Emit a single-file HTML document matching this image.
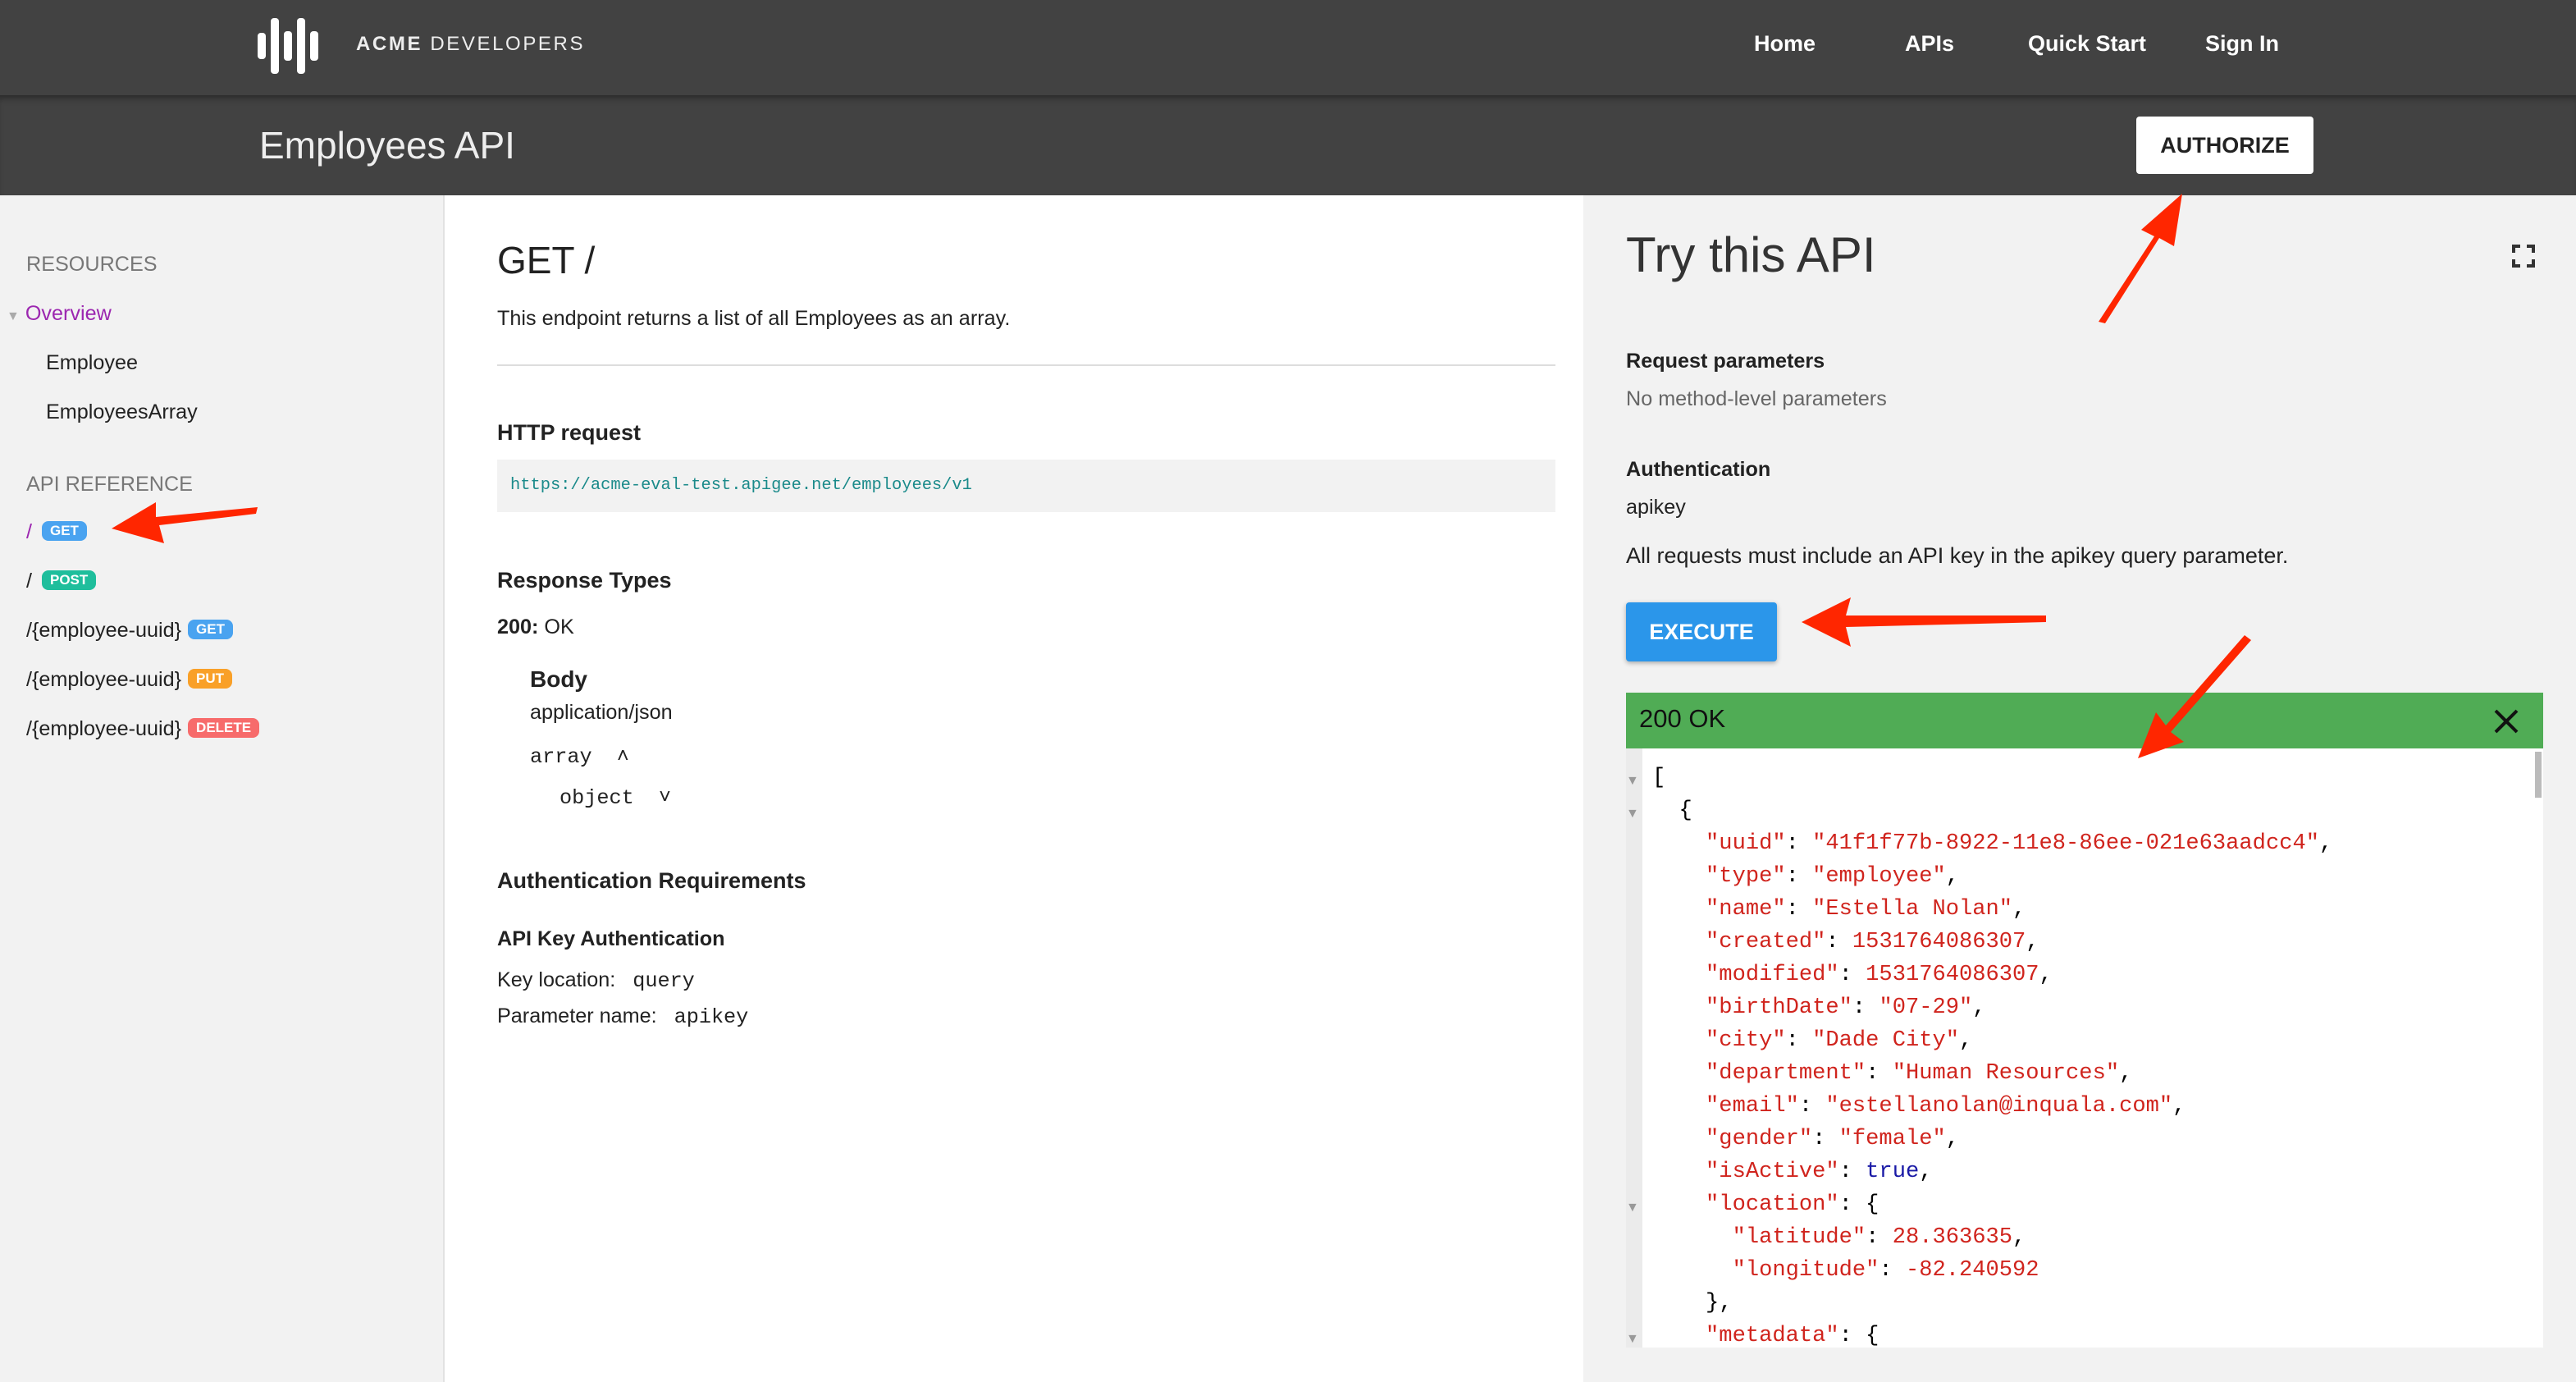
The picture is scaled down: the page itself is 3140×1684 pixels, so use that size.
<!DOCTYPE html>
<html><head><meta charset="utf-8"><style>
html{zoom:2}
*{box-sizing:border-box;margin:0;padding:0}
body{width:1570px;height:842px;overflow:hidden;font-family:"Liberation Sans",sans-serif;background:#fff;position:relative;color:#222;font-size:12.6px}
.a{position:absolute}
.top{left:0;top:0;width:1570px;height:58px;background:#424242}
.bar2{left:0;top:58px;width:1570px;height:61px;background:#424242;box-shadow:inset 0 4px 4px -2px rgba(0,0,0,.35)}
.nav{color:#fff;font-weight:bold;font-size:13.5px;top:19px}
.side{left:0;top:119px;width:271px;height:723px;background:#f2f2f2;border-right:1px solid #e2e2e2}
.right{left:965px;top:119px;width:605px;height:723px;background:#f2f2f2}
.badge{display:inline-block;color:#fff;font-size:8.5px;font-weight:bold;border-radius:4px;padding:1px 5px;vertical-align:2px;margin-left:4px}
.mono{font-family:"Liberation Mono",monospace}
.code{font-family:"Liberation Mono",monospace;font-size:13.55px;line-height:20px;white-space:pre;color:#000}
.k{color:#d0241d}.s{color:#d0241d}.n{color:#d0241d}.t{color:#1a1aa6}
</style></head><body>
<div class="a top"></div>
<svg class="a" style="left:157px;top:11px" width="46" height="34"><g fill="#fff"><rect x="0" y="9" width="5" height="16" rx="2"/><rect x="8" y="0" width="5" height="34" rx="2"/><rect x="16" y="8" width="5" height="18" rx="2"/><rect x="24" y="0" width="5" height="34" rx="2"/><rect x="32" y="8" width="5" height="18" rx="2"/></g></svg>
<div class="a" style="left:217px;top:20px;color:#eee;font-size:12px;letter-spacing:1.3px"><b>ACME</b> DEVELOPERS</div>
<div class="a nav" style="left:1069px">Home</div>
<div class="a nav" style="left:1161px">APIs</div>
<div class="a nav" style="left:1236px">Quick Start</div>
<div class="a nav" style="left:1344px">Sign In</div>
<div class="a bar2"></div>
<div class="a" style="left:158px;top:75px;color:#eee;font-size:23px">Employees API</div>
<div class="a" style="left:1302px;top:71px;width:108px;height:35px;background:#fff;border-radius:2px;font-weight:bold;font-size:13.5px;text-align:center;line-height:35px;color:#222">AUTHORIZE</div>

<div class="a side"></div>
<div class="a" style="left:16px;top:154px;color:#777">RESOURCES</div>
<div class="a" style="left:4px;top:184px;color:#9c27b0"><span style="color:#aaa;font-size:8px">▼</span> Overview</div>
<div class="a" style="left:28px;top:214px">Employee</div>
<div class="a" style="left:28px;top:244px">EmployeesArray</div>
<div class="a" style="left:16px;top:288px;color:#777">API REFERENCE</div>
<div class="a" style="left:16px;top:317px"><span style="color:#9c27b0">/</span><span class="badge" style="background:#4aa3f0;margin-left:6px">GET</span></div>
<div class="a" style="left:16px;top:347px">/<span class="badge" style="background:#1fbe9c;margin-left:6px">POST</span></div>
<div class="a" style="left:16px;top:377px">/{employee-uuid}<span class="badge" style="background:#4aa3f0">GET</span></div>
<div class="a" style="left:16px;top:407px">/{employee-uuid}<span class="badge" style="background:#f9a028">PUT</span></div>
<div class="a" style="left:16px;top:437px">/{employee-uuid}<span class="badge" style="background:#f76b6b">DELETE</span></div>

<div class="a" style="left:303px;top:145px;font-size:23px">GET /</div>
<div class="a" style="left:303px;top:187px">This endpoint returns a list of all Employees as an array.</div>
<div class="a" style="left:303px;top:222px;width:645px;height:1px;background:#ddd"></div>
<div class="a" style="left:303px;top:256px;font-size:13.5px;font-weight:bold">HTTP request</div>
<div class="a mono" style="left:303px;top:280px;width:645px;height:32px;background:#f2f2f2;color:#1a8a8a;font-size:10.2px;padding:10px 8px">https://acme-eval-test.apigee.net/employees/v1</div>
<div class="a" style="left:303px;top:346px;font-size:13.5px;font-weight:bold">Response Types</div>
<div class="a" style="left:303px;top:375px"><b>200:</b> OK</div>
<div class="a" style="left:323px;top:406px;font-size:14px;font-weight:bold">Body</div>
<div class="a" style="left:323px;top:427px">application/json</div>
<div class="a mono" style="left:323px;top:454px">array &nbsp;˄</div>
<div class="a mono" style="left:341px;top:479px">object &nbsp;˅</div>
<div class="a" style="left:303px;top:529px;font-size:13.5px;font-weight:bold">Authentication Requirements</div>
<div class="a" style="left:303px;top:565px;font-weight:bold">API Key Authentication</div>
<div class="a" style="left:303px;top:590px">Key location: &nbsp;&nbsp;<span class="mono">query</span></div>
<div class="a" style="left:303px;top:612px">Parameter name: &nbsp;&nbsp;<span class="mono">apikey</span></div>

<div class="a right"></div>
<div class="a" style="left:991px;top:138px;font-size:30px;font-weight:300;color:#333">Try this API</div>
<svg class="a" style="left:1531px;top:149px" width="14" height="14" fill="none" stroke="#333" stroke-width="2"><path d="M1 5V1h4M9 1h4v4M13 9v4H9M5 13H1V9"/></svg>
<div class="a" style="left:991px;top:213px;font-weight:bold">Request parameters</div>
<div class="a" style="left:991px;top:236px;color:#666">No method-level parameters</div>
<div class="a" style="left:991px;top:279px;font-weight:bold">Authentication</div>
<div class="a" style="left:991px;top:302px">apikey</div>
<div class="a" style="left:991px;top:331px;font-size:13.5px">All requests must include an API key in the apikey query parameter.</div>
<div class="a" style="left:991px;top:367px;width:92px;height:36px;background:#2b96ea;color:#fff;font-weight:bold;font-size:13.5px;text-align:center;line-height:36px;border-radius:2px;box-shadow:0 1px 3px rgba(0,0,0,.3)">EXECUTE</div>
<div class="a" style="left:991px;top:422px;width:559px;height:34px;background:#50ac55"></div>
<div class="a" style="left:999px;top:429px;font-size:15.5px;color:#111">200 OK</div>
<svg class="a" style="left:1520px;top:432px" width="15" height="15" stroke="#111" stroke-width="2"><path d="M1 1L14 14M14 1L1 14"/></svg>
<div class="a" style="left:991px;top:456px;width:559px;height:365px;background:#fff"></div>
<div class="a" style="left:991px;top:456px;width:10px;height:365px;background:#ebebeb"></div>
<div class="a" style="left:1545px;top:458px;width:4px;height:28px;background:#bbb"></div>
<div class="a" style="left:991px;top:466px;color:#999;font-size:8px;line-height:20px">▼<br>▼<br><br><br><br><br><br><br><br><br><br><br><br>▼<br><br><br><br>▼</div>
<div class="a code" style="left:1007px;top:464px;height:357px;overflow:hidden">[
  {
    <span class="k">"uuid"</span>: <span class="s">"41f1f77b-8922-11e8-86ee-021e63aadcc4"</span>,
    <span class="k">"type"</span>: <span class="s">"employee"</span>,
    <span class="k">"name"</span>: <span class="s">"Estella Nolan"</span>,
    <span class="k">"created"</span>: <span class="n">1531764086307</span>,
    <span class="k">"modified"</span>: <span class="n">1531764086307</span>,
    <span class="k">"birthDate"</span>: <span class="s">"07-29"</span>,
    <span class="k">"city"</span>: <span class="s">"Dade City"</span>,
    <span class="k">"department"</span>: <span class="s">"Human Resources"</span>,
    <span class="k">"email"</span>: <span class="s">"estellanolan@inquala.com"</span>,
    <span class="k">"gender"</span>: <span class="s">"female"</span>,
    <span class="k">"isActive"</span>: <span class="t">true</span>,
    <span class="k">"location"</span>: {
      <span class="k">"latitude"</span>: <span class="n">28.363635</span>,
      <span class="k">"longitude"</span>: <span class="n">-82.240592</span>
    },
    <span class="k">"metadata"</span>: {</div>

<svg class="a" style="left:0;top:0" width="1570" height="842">
<g fill="#ff2600">
<polygon points="157,309 156,313 97,320 100,331 68,322 95,306 95,315"/>
<polygon points="1279,196 1283,197 1316,145 1325,150 1330,118 1305,140 1313,144"/>
<polygon points="1247,375 1247,379 1125,382 1128,394 1098,379 1128,364 1125,375"/>
<polygon points="1368,387 1372,390 1323,446 1331,452 1303,462 1314,434 1320,442"/>
</g></svg>
</body></html>
